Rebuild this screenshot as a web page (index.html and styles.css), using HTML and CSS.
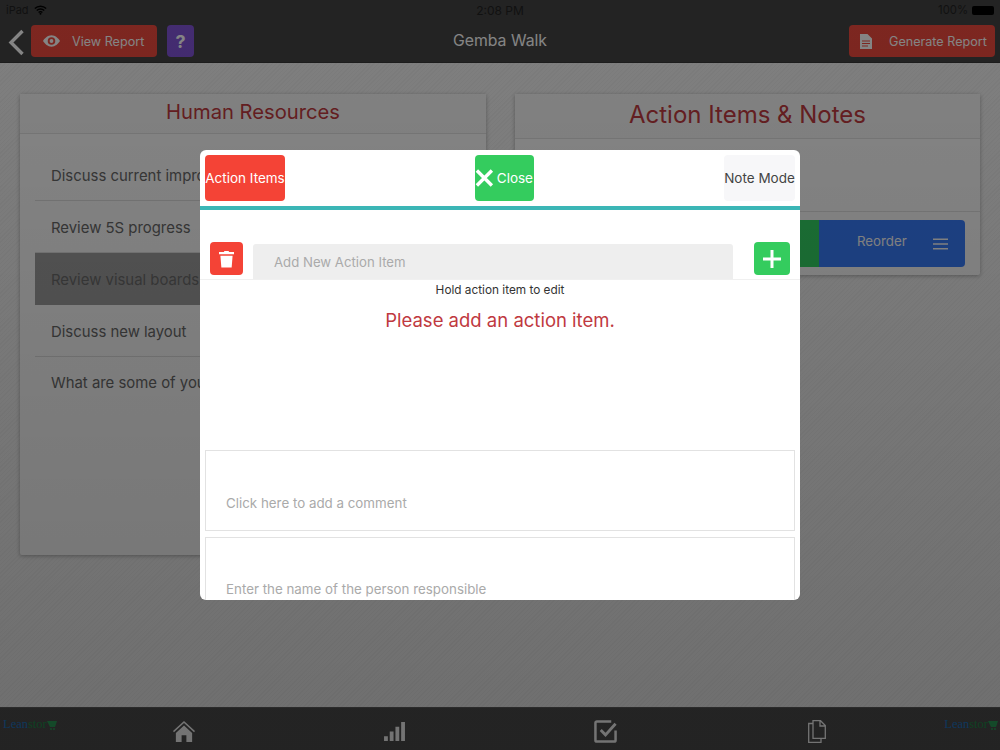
FILE: index.html
```html
<!DOCTYPE html>
<html lang="en">
<head>
<meta charset="utf-8">
<title>Gemba Walk</title>
<link rel="stylesheet" href="styles.css">
</head>
<body>
<div class="app">
  <header class="topbar">
    <div class="status">
      <div class="status-left">iPad
        <svg class="wifi" viewBox="0 0 16 12" width="13" height="10"><path d="M1 4.200a10 10 0 0 1 14 0M3.400 6.700a6.600 6.600 0 0 1 9.200 0M5.700 9a3.200 3.200 0 0 1 4.600 0" fill="none" stroke="#000" stroke-width="1.700"/><circle cx="8" cy="10.600" r="1.200" fill="#000"/></svg>
      </div>
      <div class="status-mid">2:08 PM</div>
      <div class="status-right">100%
        <span class="battery"></span>
      </div>
    </div>
    <div class="navrow">
      <div class="nav-left">
        <svg class="back" viewBox="0 0 17 27" width="17" height="27"><path d="M14.500 2 3 13.500 14.500 25" fill="none" stroke="#fff" stroke-width="3.400"/></svg>
        <button class="btn btn-red btn-view">
          <svg viewBox="0 0 18 12" width="17" height="12"><path fill-rule="evenodd" d="M9 0c4 0 7 3 9 6-2 3-5 6-9 6s-7-3-9-6c2-3 5-6 9-6zm0 2a4 4 0 1 0 0 8 4 4 0 0 0 0-8zm0 2a2 2 0 1 1 0 4 2 2 0 0 1 0-4z" fill="#fff"/></svg>
          <span>View Report</span>
        </button>
        <button class="btn btn-purple">?</button>
      </div>
      <div class="nav-title">Gemba Walk</div>
      <div class="nav-right">
        <button class="btn btn-red btn-gen">
          <svg viewBox="0 0 12 15" width="12" height="15"><path fill-rule="evenodd" d="M0 0h7.500L12 4.500V15H0zM2 6.500v1h8v-1zm0 2.500v1h8V9zm0 2.500v1h6v-1z" fill="#fff"/></svg>
          <span>Generate Report</span>
        </button>
      </div>
    </div>
  </header>

  <main class="content">
    <section class="card card-left">
      <h2 class="card-title title-left">Human Resources</h2>
      <ul class="list">
        <li class="list-item">Discuss current impro</li>
        <li class="list-item">Review 5S progress</li>
        <li class="list-item is-selected">Review visual boards</li>
        <li class="list-item">Discuss new layout</li>
        <li class="list-item">What are some of you</li>
      </ul>
    </section>
    <section class="card card-right">
      <h2 class="card-title title-right">Action Items &amp; Notes</h2>
      <div class="card-spacer"></div>
      <div class="card-actions">
        <div class="act act-green"></div>
        <div class="act act-blue">
          <span class="act-label">Reorder</span>
          <svg viewBox="0 0 16 12" width="15" height="12"><path d="M0 1h16M0 6h16M0 11h16" stroke="#fff" stroke-width="1.600"/></svg>
        </div>
      </div>
    </section>
  </main>

  <footer class="tabbar">
    <div class="logo"><span class="logo-blue">Lean</span><span class="logo-green">stor</span>
      <svg viewBox="0 0 10 10" width="10" height="10"><path d="M0 1h10L8 7H3z" fill="#2ca05a"/><circle cx="4" cy="9" r="1" fill="#2ca05a"/><circle cx="7" cy="9" r="1" fill="#2ca05a"/></svg>
    </div>
    <div class="tab">
      <svg viewBox="0 0 23 23" width="22" height="22"><path d="M11.500 1 0 11.500l1 1.200L11.500 3.200 22 12.700l1-1.200zM3 13.500V23h6v-7h5v7h6v-9.500l-8.500-7.800z" fill="#fff"/></svg>
    </div>
    <div class="tab">
      <svg viewBox="0 0 22 20" width="21" height="19" class="tab-bars"><path d="M0 15h4v5H0zM6 10h4v10H6zM12 5h4v15h-4zM18 0h4v20h-4z" fill="#fff"/></svg>
    </div>
    <div class="tab">
      <svg viewBox="0 0 24 24" width="23" height="23"><path d="M18 1.500H3A1.500 1.500 0 0 0 1.500 3v18A1.500 1.500 0 0 0 3 22.500h18a1.500 1.500 0 0 0 1.500-1.500V11" fill="none" stroke="#fff" stroke-width="2.600"/><path d="m7 10.500 5 5L22.500 4" fill="none" stroke="#fff" stroke-width="3"/></svg>
    </div>
    <div class="tab">
      <svg viewBox="0 0 18 23" width="18" height="23"><path d="M5 .7h7.500L17.300 5.500V18.300H5zM12 .7v5.300h5.300M5 3.500H.7v19h12.300v-4.200" fill="none" stroke="#fff" stroke-width="1.300"/></svg>
    </div>
    <div class="logo logo-end"><span class="logo-blue">Lean</span><span class="logo-green">stor</span>
      <svg viewBox="0 0 10 10" width="10" height="10"><path d="M0 1h10L8 7H3z" fill="#2ca05a"/><circle cx="4" cy="9" r="1" fill="#2ca05a"/><circle cx="7" cy="9" r="1" fill="#2ca05a"/></svg>
    </div>
  </footer>

  <div class="overlay">
    <div class="modal">
      <div class="modal-tabs">
        <button class="mbtn mbtn-red">Action Items</button>
        <button class="mbtn mbtn-green">
          <svg viewBox="0 0 20 20" width="20" height="20"><path d="M2 2l16 16M18 2 2 18" stroke="#fff" stroke-width="3.600"/></svg>
          <span>Close</span>
        </button>
        <button class="mbtn mbtn-light">Note Mode</button>
      </div>
      <div class="modal-rule"></div>
      <div class="add-row">
        <button class="icon-btn icon-red">
          <svg viewBox="0 0 16 18" width="15" height="18"><path d="M5.500 1.500V.5h5v1H16v2.500H0V1.500zM1.500 5.500h13L13.500 18h-11z" fill="#fff"/></svg>
        </button>
        <div class="add-input">Add New Action Item</div>
        <button class="icon-btn icon-green">
          <svg viewBox="0 0 18 18" width="18" height="18"><path d="M9 0v18M0 9h18" stroke="#fff" stroke-width="3"/></svg>
        </button>
      </div>
      <p class="hint">Hold action item to edit</p>
      <p class="empty">Please add an action item.</p>
      <div class="field field-comment">Click here to add a comment</div>
      <div class="field field-person">Enter the name of the person responsible</div>
    </div>
  </div>
</div>
</body>
</html>
```
FILE: styles.css
```css
* { box-sizing: border-box; }
html, body { margin: 0; padding: 0; }
body { font-family: Inter, "Liberation Sans", sans-serif; color: #333; }
button { font: inherit; border: 0; padding: 0; }

.app {
  position: relative;
  width: 1000px;
  height: 750px;
  overflow: hidden;
  display: flex;
  flex-direction: column;
  background-color: #f2f2f2;
  background-image: repeating-linear-gradient(135deg, #efefef 0 1px, #f5f5f5 1px 3px);
}

.topbar { background: #434343; height: 63px; flex: none; border-bottom: 1px solid #383838; }
.status {
  position: relative;
  z-index: 3;
  height: 20px;
  display: grid;
  grid-template-columns: 1fr auto 1fr;
  align-items: center;
  padding: 0 6px;
  font-size: 11px;
  color: #111;
}
.status-left { display: flex; align-items: center; gap: 5px; }
.status-mid { font-size: 12px; }
.status-right { display: flex; align-items: center; justify-content: flex-end; gap: 4px; font-size: 11.300px; }
.battery { width: 22px; height: 9px; background: #000; border-radius: 2px; display: block; }
.wifi { display: block; }

.navrow {
  height: 42px;
  display: grid;
  grid-template-columns: 1fr auto 1fr;
  align-items: start;
  padding: 5px 5px 0;
}
.nav-left { display: flex; align-items: center; gap: 6px; }
.nav-left .btn-purple { margin-left: 4px; }
.back { margin: 2px 0 0 3px; display: block; }
.nav-title { font-size: 15.800px; color: #fff; line-height: 32px; }
.nav-right { display: flex; justify-content: flex-end; }

.btn {
  height: 32px;
  border-radius: 4px;
  color: #fff;
  display: flex;
  align-items: center;
  font-size: 12.600px;
}
.btn-red { background: #f04a3e; }
.btn-view { width: 126px; padding-left: 12px; gap: 12px; }
.btn-gen { width: 146px; padding-left: 11px; gap: 17px; }
.btn-purple {
  width: 27px;
  background: #8254d8;
  justify-content: center;
  font-size: 18px;
  font-weight: 700;
}

.content {
  flex: 1;
  display: flex;
  align-items: flex-start;
  gap: 29px;
  padding: 31px 20px 0;
}
.card {
  background: #fff;
  box-shadow: 0 1px 4px rgba(0, 0, 0, .3);
  border-radius: 2px;
}
.card-left { width: 466px; height: 461px; }
.card-right { width: 465px; height: 181px; }
.card-title {
  margin: 0;
  text-align: center;
  font-weight: 400;
  color: #c23a40;
  background: #fafafa;
  border-bottom: 1px solid #e4e4e4;
}
.title-left { height: 40px; font-size: 20.200px; line-height: 36px; }
.title-right { height: 45px; font-size: 24px; line-height: 42px; }
.list { list-style: none; margin: 0; padding: 15px 15px 0; }
.list-item {
  height: 52px;
  line-height: 54px;
  padding-left: 16px;
  font-size: 14.900px;
  white-space: nowrap;
  overflow: hidden;
  color: #6a6a6a;
  border-bottom: 1px solid #e0e0e0;
}
.list-item:last-child { border-bottom: 0; line-height: 52px; }
.list-item.is-selected { background: #a0a0a0; border-bottom-color: #a0a0a0; color: #6c6c6c; }
.card-spacer { height: 73px; border-bottom: 1px solid #e4e4e4; }
.card-actions { display: flex; margin: 8px 15px 0; height: 47px; }
.act-green { flex: 1; background: #34d565; border-radius: 4px 0 0 4px; }
.act-blue {
  width: 146px;
  background: #387eff;
  border-radius: 0 4px 4px 0;
  color: #fff;
  font-size: 13.300px;
  display: flex;
  align-items: center;
  padding: 0 16px 0 38px;
  gap: 26px;
}
.act-label { margin-bottom: 6px; }

.tabbar {
  flex: none;
  height: 43px;
  background: #4e4e4e;
  border-top: 1px solid #5e5e5e;
  display: grid;
  grid-template-columns: 78px repeat(4, 211px) 78px;
  align-items: start;
}
.tab { display: flex; justify-content: center; padding-top: 12px; }
.tab svg { display: block; }
.tab .tab-bars { margin-top: 2px; }
.logo {
  display: flex;
  align-items: center;
  padding: 11px 0 0 3px;
  font-family: "Liberation Serif", serif;
  font-size: 12.500px;
  line-height: 11px;
}
.logo-end { justify-content: flex-end; padding: 11px 2px 0 0; }
.logo-blue { color: #1e78c8; }
.logo-green { color: #20904c; }

.overlay {
  position: absolute;
  inset: 0;
  z-index: 2;
  background: linear-gradient(to bottom, rgba(0, 0, 0, .48), rgba(0, 0, 0, .55));
  display: flex;
  justify-content: center;
  padding-top: 150px;
}
.modal {
  width: 600px;
  height: 450px;
  background: #fff;
  border-radius: 6px;
  overflow: hidden;
}
.modal-tabs {
  display: flex;
  justify-content: space-between;
  padding: 5px 5px 0;
  height: 56px;
}
.mbtn {
  height: 46px;
  border-radius: 4px;
  font-size: 13.500px;
  white-space: nowrap;
}
.mbtn-red { width: 80px; background: #f44336; color: #fff; }
.mbtn-green {
  width: 59px;
  background: #34cc5e;
  color: #fff;
  display: flex;
  align-items: center;
  justify-content: flex-end;
  gap: 3px;
  padding-right: 1px;
}
.mbtn-light { width: 71px; background: #f7f7f9; color: #444; }
.modal-rule { height: 4px; background: #3bb6b6; }
.add-row {
  display: flex;
  align-items: flex-start;
  height: 70px;
  padding: 32px 10px 0;
  border-bottom: 1px solid #f0f0f0;
}
.icon-btn {
  width: 33px;
  height: 33px;
  border-radius: 4px;
  display: flex;
  align-items: center;
  justify-content: center;
  flex: none;
}
.icon-red { background: #f44336; }
.icon-green { background: #34cc5e; width: 36px; }
.add-input {
  width: 480px;
  height: 35px;
  margin: 2px 21px 0 10px;
  padding-left: 21px;
  background: #eeeeee;
  border-radius: 3px 3px 0 0;
  color: #aaa;
  font-size: 13.200px;
  line-height: 37px;
}
.hint { margin: 0; height: 20px; text-align: center; font-size: 11.800px; line-height: 21px; color: #333; }
.empty { margin: 0; height: 150px; padding-top: 9px; text-align: center; font-size: 18.500px; line-height: 22px; color: #c0393f; }
.field {
  margin: 0 5px 6px;
  border: 1px solid #e2e2e2;
  padding-left: 20px;
  color: #aaa;
  font-size: 13.350px;
}
.field-comment { height: 81px; padding-top: 44px; }
.field-person { height: 80px; padding-top: 43px; }
```
